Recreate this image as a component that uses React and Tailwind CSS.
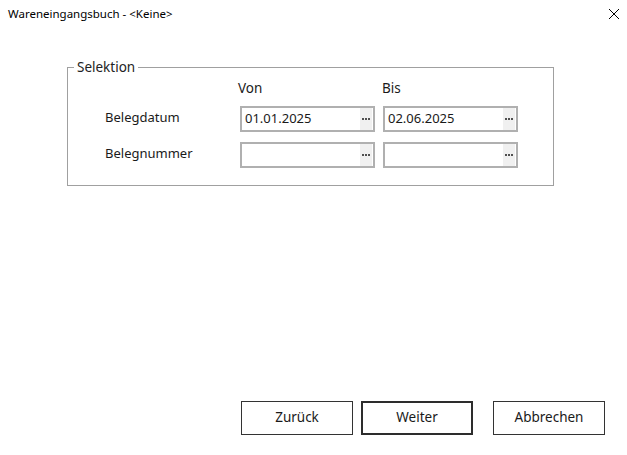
import React from "react";

function Field({ value }) {
  return (
    <div className="w-[135px] h-[26px] border-2 border-[#b0b0b0] bg-white flex items-stretch">
      <div className="flex-1 flex items-center pl-[3px] pb-[2px] text-[13px] text-[#1a1a1a] leading-none">{value}</div>
      <div className="w-[12px] bg-[#f0f0f0] flex items-center justify-center mr-[1px]">
        <div className="flex gap-[1px]">
          <span className="w-[2px] h-[2px] bg-[#505050]" />
          <span className="w-[2px] h-[2px] bg-[#505050]" />
          <span className="w-[2px] h-[2px] bg-[#505050]" />
        </div>
      </div>
    </div>
  );
}

function Btn({ children, primary }) {
  return (
    <button
      className={
        "w-[112px] h-[34px] bg-white flex items-center justify-center pb-[2px] text-[13.5px] text-[#1a1a1a] " +
        (primary ? "border-2 border-[#2d2d2d]" : "border border-[#333333]")
      }
    >
      {children}
    </button>
  );
}

export default function App() {
  return (
    <div
      className="w-[627px] h-[455px] bg-white flex flex-col"
      style={{ fontFamily: '"Noto Sans", "Open Sans", sans-serif' }}
    >
      <div className="h-[26px] flex items-center justify-between pl-[8px] pr-[6px] pt-[1px]">
        <span className="text-[11.5px] text-[#000]">Wareneingangsbuch - &lt;Keine&gt;</span>
        <svg width="12" height="12" viewBox="0 0 12 12" className="mr-[1px]">
          <path d="M1 1L11 11M11 1L1 11" stroke="#000" strokeWidth="1" />
        </svg>
      </div>

      <div className="ml-[67px] mt-[41px] w-[487px] h-[119px] border border-[#a0a0a0] relative">
        <span className="absolute left-[6px] top-[-10px] bg-white px-[3px] text-[13.5px] leading-[18px] text-[#222]">
          Selektion
        </span>
        <div className="pl-[37px] pt-[10px] grid grid-cols-[127px_135px_135px] gap-x-[8px] items-center">
          <div className="h-[20px]" />
          <div className="h-[20px] text-[13.5px] text-[#1a1a1a] leading-[20px] -ml-[2px]">Von</div>
          <div className="h-[20px] text-[13.5px] text-[#1a1a1a] leading-[20px] -ml-[1px]">Bis</div>

          <div className="mt-[8px] pb-[3px] text-[13px] text-[#1a1a1a]">Belegdatum</div>
          <div className="mt-[8px]"><Field value="01.01.2025" /></div>
          <div className="mt-[8px]"><Field value="02.06.2025" /></div>

          <div className="mt-[10px] pb-[3px] text-[13px] text-[#1a1a1a]">Belegnummer</div>
          <div className="mt-[10px]"><Field value="" /></div>
          <div className="mt-[10px]"><Field value="" /></div>
        </div>
      </div>

      <div className="flex-1" />
      <div className="flex pl-[241px] pb-[20px]">
        <Btn>Zurück</Btn>
        <div className="ml-[8px]"><Btn primary>Weiter</Btn></div>
        <div className="ml-[20px]"><Btn>Abbrechen</Btn></div>
      </div>
    </div>
  );
}
